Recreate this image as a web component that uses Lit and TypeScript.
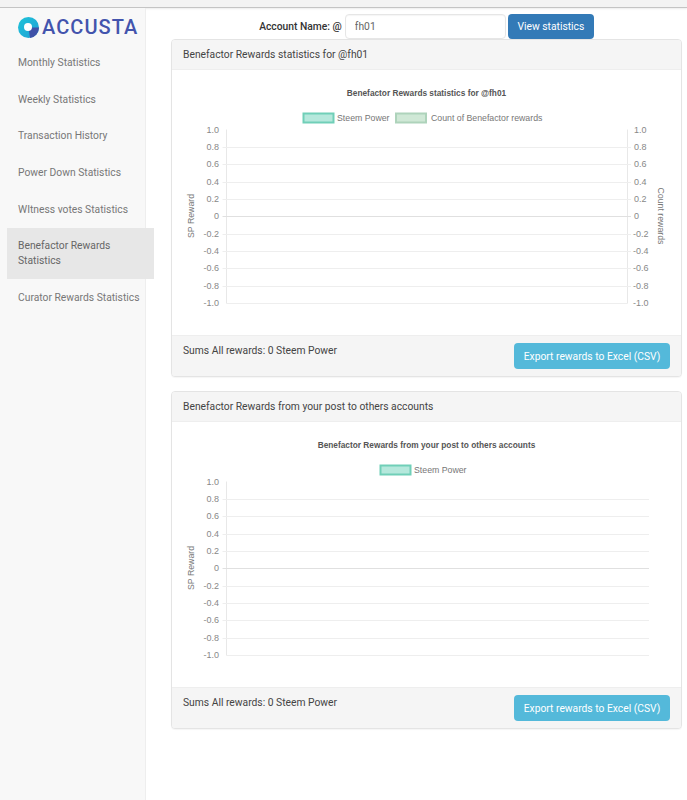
import { LitElement, html, css, svg } from "lit";
import { customElement, property } from "lit/decorators.js";

const TICKS = ["1.0", "0.8", "0.6", "0.4", "0.2", "0", "-0.2", "-0.4", "-0.6", "-0.8", "-1.0"];
const TOP = 59.6;
const STEP = 17.35;

@customElement("rewards-chart")
class RewardsChart extends LitElement {
  @property() heading = "";
  @property({ type: Boolean }) dual = false;

  static styles = css`
    :host { display: block; height: 265px; }
    svg { display: block; }
    text { font-family: "Liberation Sans", Arial, sans-serif; font-size: 8.75px; fill: #777; }
    .title { font-weight: 700; font-size: 8.3px; fill: #555; text-anchor: middle; }
    .tick { font-size: 9px; fill: #888; }
    .grid { stroke: #eee; stroke-width: 1; }
    .zero { stroke: #e0e0e0; stroke-width: 1; }
    .axis { stroke: #e8e8e8; stroke-width: 1; }
    .left { text-anchor: end; }
    .mid { text-anchor: middle; }
  `;

  render() {
    const x0 = 54.5;
    const x1 = this.dual ? 455.5 : 477;
    const rightEnd = this.dual ? 459 : 477;
    const ys = TICKS.map((_, i) => Math.round(TOP + i * STEP) + 0.5);
    const base = TICKS.map((_, i) => Math.floor(60.3 + i * 17.3) + 3);
    const last = TICKS.length - 1;
    return html`<svg width="509" height="265" viewBox="0 0 509 265">
      <text class="title" x="254.5" y="26">${this.heading}</text>
      ${this.dual
        ? svg`
          <rect x="131.5" y="43.5" width="30" height="9" fill="#b5e8dc" stroke="#70cfb8" stroke-width="2"/>
          <text x="165" y="51">Steem Power</text>
          <rect x="224" y="43.5" width="30" height="9" fill="#cfe8d6" stroke="#aed3bb" stroke-width="2"/>
          <text x="259" y="51">Count of Benefactor rewards</text>`
        : svg`
          <rect x="208.5" y="43.5" width="30" height="9" fill="#b5e8dc" stroke="#70cfb8" stroke-width="2"/>
          <text x="242" y="51">Steem Power</text>`}
      <line class="axis" x1=${x0} x2=${x0} y1=${ys[0] - 1} y2=${ys[last]} />
      ${this.dual ? svg`<line class="axis" x1=${x1} x2=${x1} y1=${ys[0] - 1} y2=${ys[last]} />` : ""}
      ${TICKS.map((t, i) => svg`
        ${i === 0
          ? ""
          : svg`<line class=${t === "0" ? "zero" : "grid"} x1=${i === last ? x0 : x0 - 4} x2=${i === last ? x1 : rightEnd} y1=${ys[i]} y2=${ys[i]} />`}
        <text class="tick left" x="47" y=${base[i]}>${t}</text>
        ${this.dual ? svg`<text class="tick" x=${t.startsWith("-") ? 461 : 462} y=${base[i]}>${t}</text>` : ""}
      `)}
      <text class="mid" transform="translate(22 146) rotate(-90)">SP Reward</text>
      ${this.dual ? svg`<text class="mid" transform="translate(486 146) rotate(90)">Count rewards</text>` : ""}
    </svg>`;
  }
}

@customElement("app-root")
class AppRoot extends LitElement {
  static styles = css`
    :host { display: block; font-family: Roboto, "Liberation Sans", sans-serif; font-size: 10.3px; color: #444; background: #fff; }
    * { box-sizing: border-box; }
    .topbar { height: 8px; background: #f3f3f3; border-bottom: 1px solid #c4c4c4; box-shadow: 0 1px 2px rgba(0,0,0,.08); }
    .layout { display: flex; min-height: 792px; }
    aside { flex: 0 0 146px; width: 146px; background: #f8f8f8; border-right: 1px solid #eee; }
    .logo { display: flex; align-items: center; gap: 3px; height: 36.3px; padding: 2px 0 0 18px; }
    .logo svg { display: block; flex: none; }
    .logo span { font-family: Roboto, sans-serif; font-size: 20px; font-weight: 500; line-height: 1; letter-spacing: 1.05px; color: #4354ad; }
    nav { display: flex; flex-direction: column; margin-right: -9px; }
    nav a { display: block; margin-left: 7px; padding: 10.83px 11px; line-height: 15px; color: #777; font-size: 10.3px; }
    nav a.active { background: #e7e7e7; color: #666; padding: 10.8px 11px; }
    main { flex: 1; min-width: 0; padding: 6px 5px 0 25px; }
    .search { display: flex; justify-content: center; align-items: center; height: 25px; }
    label { font-family: Roboto, sans-serif; font-weight: 500; font-size: 10.3px; color: #333; margin-right: 3px; }
    input { width: 161px; height: 25px; border: 1px solid #e6e6e6; border-radius: 4px; padding: 0 9px; font: 10.3px Roboto, sans-serif; color: #666; background: #fff; outline: none; box-shadow: inset 0 1px 1px rgba(0,0,0,.04); }
    button { border: none; border-radius: 4px; color: #fff; font: 10.3px Roboto, sans-serif; padding: 0; }
    .primary { width: 86px; height: 25px; margin-left: 2px; background: #337ab7; }
    .info { width: 156px; height: 26px; background: #54b9da; }
    .card { border: 1px solid #e4e4e4; border-radius: 4px; margin-bottom: 14px; background: #fff; box-shadow: 0 1px 1px rgba(0,0,0,.04); overflow: hidden; }
    .card-head { height: 30px; padding: 0 11px; background: #f5f5f5; border-bottom: 1px solid #eee; line-height: 29px; color: #444; }
    .card-foot { display: flex; justify-content: space-between; align-items: flex-start; height: 41px; padding: 7px 11px 0; background: #f5f5f5; border-top: 1px solid #eee; }
    .sum { line-height: 14px; padding-top: 1px; color: #444; }
  `;

  private card(head: string, chartTitle: string, dual: boolean) {
    return html`<section class="card">
      <div class="card-head">${head}</div>
      <rewards-chart .heading=${chartTitle} ?dual=${dual}></rewards-chart>
      <div class="card-foot">
        <span class="sum">Sums All rewards: 0 Steem Power</span>
        <button class="info">Export rewards to Excel (CSV)</button>
      </div>
    </section>`;
  }

  render() {
    const items = [
      "Monthly Statistics", "Weekly Statistics", "Transaction History", "Power Down Statistics",
      "WItness votes Statistics", "Benefactor Rewards Statistics", "Curator Rewards Statistics",
    ];
    return html`
      <div class="topbar"></div>
      <div class="layout">
        <aside>
          <div class="logo">
            <svg width="21" height="21" viewBox="0 0 21 21">
              <defs><linearGradient id="lg" x1="0" y1="0" x2="1" y2="1"><stop offset="0" stop-color="#1fc4d8"/><stop offset="1" stop-color="#1f9fd6"/></linearGradient></defs>
              <circle cx="10.5" cy="10.5" r="10.5" fill="url(#lg)"/>
              <path d="M10.5 10.5 L21 10.5 A10.5 10.5 0 0 1 12 20.9 Z" fill="#3f51a8"/>
              <circle cx="10" cy="10" r="4" fill="#fff"/>
            </svg>
            <span>ACCUSTA</span>
          </div>
          <nav>
            ${items.map((t, i) => html`<a class=${i === 5 ? "active" : ""}>${t}</a>`)}
          </nav>
        </aside>
        <main>
          <div class="search">
            <label>Account Name: @</label>
            <input value="fh01" />
            <button class="primary">View statistics</button>
          </div>
          ${this.card("Benefactor Rewards statistics for @fh01", "Benefactor Rewards statistics for @fh01", true)}
          ${this.card("Benefactor Rewards from your post to others accounts", "Benefactor Rewards from your post to others accounts", false)}
        </main>
      </div>
    `;
  }
}
